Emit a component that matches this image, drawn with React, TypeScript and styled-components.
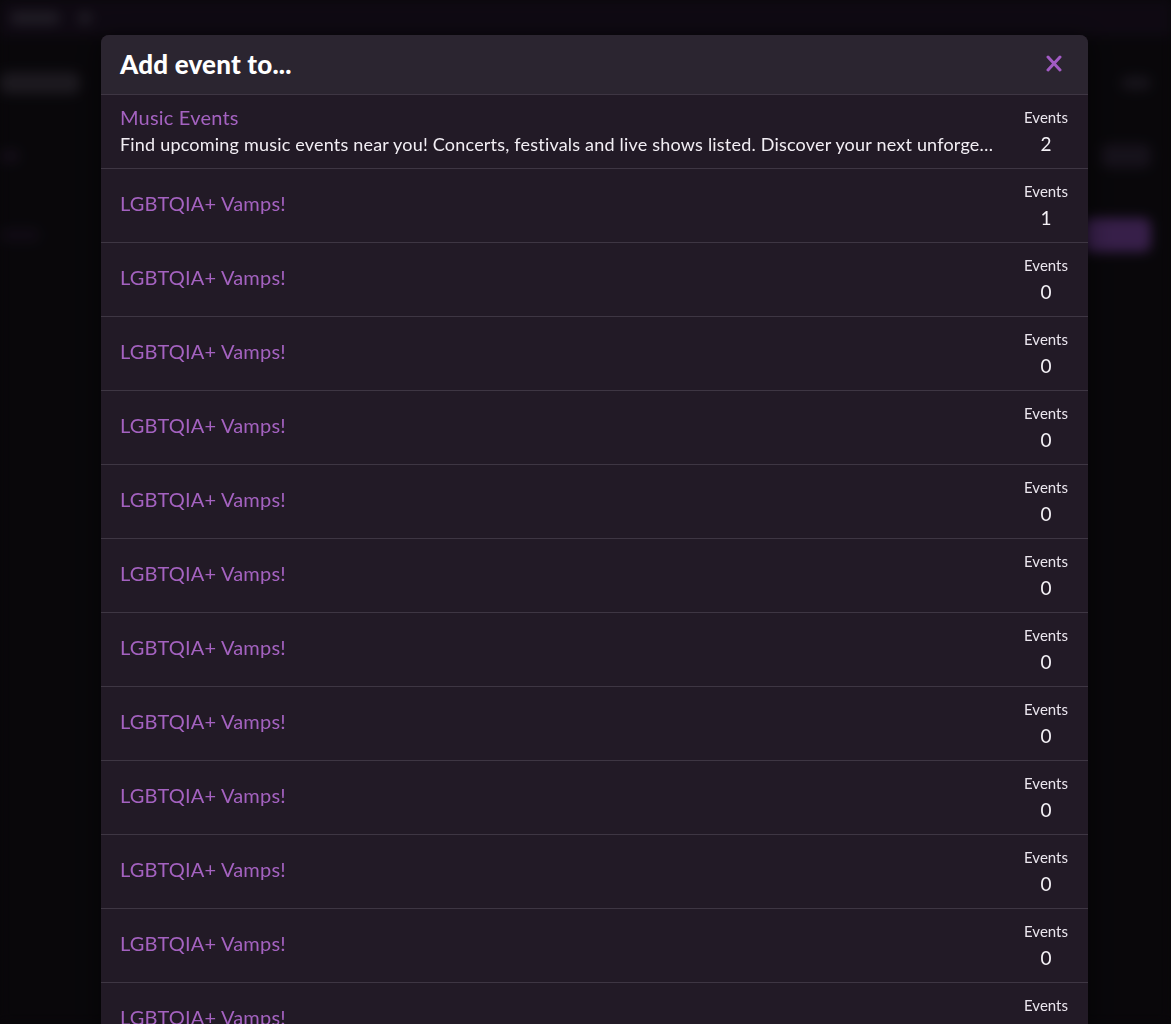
import React from 'react';
import styled, { createGlobalStyle } from 'styled-components';

interface Collection {
  id: string;
  name: string;
  description?: string;
  events: number;
}

const GlobalStyle = createGlobalStyle`
  html, body {
    margin: 0;
    padding: 0;
    background: #0c0a0e;
    height: 100%;
    overflow: hidden;
  }
  body {
    font-family: Lato, 'Noto Sans', sans-serif;
  }
`;

// blurred page behind the modal
const Page = styled.div`
  height: 1024px;
  background: #0c0a0e;
  filter: blur(6px);
  display: flex;
  flex-direction: column;
`;

const TopBar = styled.div`
  height: 36px;
  background: #140d19;
  display: flex;
  align-items: center;
  gap: 18px;
  padding: 0 10px;
`;

const GhostPill = styled.div<{ $w: number; $h?: number; $tone?: string }>`
  width: ${({ $w }) => $w}px;
  height: ${({ $h }) => $h || 14}px;
  border-radius: 8px;
  background: ${({ $tone }) => $tone || '#2a2530'};
`;

const BackdropBody = styled.div`
  flex: 1;
  display: flex;
  flex-direction: column;
  gap: 50px;
  padding: 36px 0 0 0;
`;

const GhostRow = styled.div`
  display: flex;
  justify-content: space-between;
  align-items: center;
  padding: 0 20px 0 0;
`;

const Overlay = styled.div`
  position: fixed;
  inset: 0;
  background: rgba(0, 0, 0, 0.25);
`;

const Modal = styled.div`
  position: fixed;
  top: 35px;
  left: 101px;
  width: 987px;
  background: #221a26;
  border-radius: 8px 8px 0 0;
  overflow: hidden;
  box-shadow: 0 4px 24px rgba(0, 0, 0, 0.5);
`;

const Header = styled.div`
  height: 60px;
  box-sizing: border-box;
  background: #2b2530;
  display: flex;
  align-items: center;
  justify-content: space-between;
  padding: 0 26px 2px 19px;
  border-bottom: 1px solid #3e3643;
`;

const Title = styled.h2`
  margin: 0;
  font-size: 26px;
  line-height: 30px;
  font-weight: 900;
  color: #ffffff;
  letter-spacing: 0.2px;
`;

const CloseButton = styled.button`
  background: none;
  border: none;
  padding: 0;
  width: 16px;
  height: 18px;
  display: flex;
  align-items: center;
  justify-content: center;
  cursor: pointer;
`;

const Row = styled.div`
  height: 73px;
  display: flex;
  align-items: center;
  justify-content: space-between;
  padding: 0 18px 0 19px;
  border-bottom: 1px solid #3e3643;
`;

const Info = styled.div<{ $solo: boolean }>`
  display: flex;
  flex-direction: column;
  gap: 3px;
  min-width: 0;
  flex: 1;
  padding-bottom: ${({ $solo }) => ($solo ? 6 : 2)}px;
`;

const Name = styled.span`
  font-size: 20px;
  line-height: 24px;
  color: #a462c0;
  letter-spacing: 0.2px;
`;

const Description = styled.span`
  font-size: 18px;
  line-height: 24px;
  color: #f2eef4;
  letter-spacing: 0.2px;
  white-space: nowrap;
  overflow: hidden;
  text-overflow: ellipsis;
  max-width: 874px;
`;

const Count = styled.div`
  display: flex;
  flex-direction: column;
  align-items: center;
  width: 48px;
  gap: 6px;
`;

const CountLabel = styled.span`
  font-size: 15px;
  line-height: 18px;
  color: #ebe6ee;
`;

const CountValue = styled.span`
  font-size: 19px;
  line-height: 24px;
  color: #f4f1f6;
`;

const collections: Collection[] = [
  {
    id: 'music',
    name: 'Music Events',
    description:
      'Find upcoming music events near you! Concerts, festivals and live shows listed. Discover your next unforgettable night out.',
    events: 2,
  },
  { id: 'v1', name: 'LGBTQIA+ Vamps!', events: 1 },
  ...Array.from({ length: 11 }, (_, i) => ({ id: `v${i + 2}`, name: 'LGBTQIA+ Vamps!', events: 0 })),
];

const App: React.FC = () => {
  return (
    <>
      <GlobalStyle />
      <Page>
        <TopBar>
          <GhostPill $w={50} />
          <GhostPill $w={14} />
        </TopBar>
        <BackdropBody>
          <GhostRow>
            <GhostPill $w={80} $h={22} $tone="#26222a" />
            <GhostPill $w={30} $tone="#1f1b24" />
          </GhostRow>
          <GhostRow>
            <GhostPill $w={20} $tone="#1a121f" />
            <GhostPill $w={50} $h={24} $tone="#1e1824" />
          </GhostRow>
          <GhostRow>
            <GhostPill $w={40} $tone="#160f1b" />
            <GhostPill $w={68} $h={34} $tone="#4a2a62" />
          </GhostRow>
        </BackdropBody>
      </Page>
      <Overlay />
      <Modal>
        <Header>
          <Title>Add event to...</Title>
          <CloseButton aria-label="Close">
            <svg width="16" height="17" viewBox="0 0 16 17">
              <path d="M2 2 L14 15 M14 2 L2 15" stroke="#a25bc4" strokeWidth="3" strokeLinecap="round" />
            </svg>
          </CloseButton>
        </Header>
        {collections.map(c => (
          <Row key={c.id}>
            <Info $solo={!c.description}>
              <Name>{c.name}</Name>
              {c.description && <Description>{c.description}</Description>}
            </Info>
            <Count>
              <CountLabel>Events</CountLabel>
              <CountValue>{c.events}</CountValue>
            </Count>
          </Row>
        ))}
      </Modal>
    </>
  );
};

export default App;
